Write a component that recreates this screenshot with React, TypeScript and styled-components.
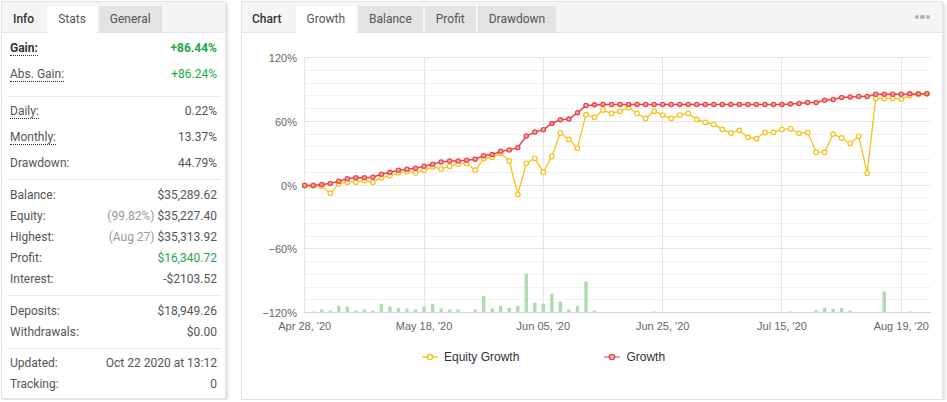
import React from 'react';
import styled, { createGlobalStyle } from 'styled-components';

const GlobalStyle = createGlobalStyle`
  html, body {
    margin: 0;
    padding: 0;
    background: #ffffff;
  }
  body {
    font-family: Roboto, 'Liberation Sans', Arial, sans-serif;
    font-size: 12px;
    color: #555555;
  }
`;

const Page = styled.div`
  display: flex;
  align-items: flex-start;
  gap: 15px;
  padding: 1px 0 0 1px;
`;

const Panel = styled.div<{ $width: number; $height: number }>`
  display: flex;
  flex-direction: column;
  box-sizing: border-box;
  width: ${(p) => p.$width}px;
  height: ${(p) => p.$height}px;
  background: #ffffff;
  border: 1px solid #e3e3e3;
  box-shadow: 2px 2px 3px rgba(0, 0, 0, 0.13);
`;

const Header = styled.div`
  display: flex;
  align-items: flex-end;
  height: 30px;
  background: #f5f5f5;
  border-bottom: 1px solid #e6e6e6;
`;

const Title = styled.div<{ $pl: number; $pr: number }>`
  height: 27px;
  line-height: 27px;
  margin-bottom: -1px;
  padding: 0 ${(p) => p.$pr}px 0 ${(p) => p.$pl}px;
  color: #333333;
  font-weight: 500;
`;

const Tab = styled.div<{ $active?: boolean }>`
  height: 27px;
  line-height: 27px;
  margin-bottom: -1px;
  margin-right: 2px;
  padding: 0 11px;
  background: ${(p) => (p.$active ? '#ffffff' : '#e3e3e3')};
  color: #555555;
`;

const Dots = styled.div`
  display: flex;
  gap: 1px;
  align-self: center;
  margin: 0 12px 0 auto;
`;

const Dot = styled.span`
  width: 4.5px;
  height: 4.5px;
  border-radius: 50%;
  background: #b3b3b3;
`;

const Section = styled.div<{ $pt: number; $pb: number; $last?: boolean }>`
  margin: 0 4px 0 5px;
  padding: ${(p) => p.$pt}px 0 ${(p) => p.$pb}px;
  border-bottom: ${(p) => (p.$last ? 'none' : '1px solid #ebebeb')};
`;

const Row = styled.div<{ $h: number }>`
  display: flex;
  align-items: center;
  justify-content: space-between;
  height: ${(p) => p.$h}px;
  padding: 0 4px 0 3px;
`;

const Label = styled.span<{ $tip?: boolean; $bold?: boolean }>`
  line-height: 14px;
  color: ${(p) => (p.$bold ? '#333333' : '#555555')};
  font-weight: ${(p) => (p.$bold ? 700 : 400)};
  border-bottom: ${(p) => (p.$tip ? '1px dotted #333333' : 'none')};
`;

const Value = styled.span<{ $green?: boolean; $bold?: boolean }>`
  color: ${(p) => (p.$green ? '#22a748' : '#555555')};
  font-weight: ${(p) => (p.$bold ? 700 : 400)};
`;

const Muted = styled.span`
  color: #9a9a9a;
  margin-right: 3px;
`;

const ChartBody = styled.div`
  display: flex;
  flex-direction: column;
`;

const Legend = styled.div`
  display: flex;
  align-items: center;
  gap: 85px;
  height: 34px;
  padding-left: 180px;
  font-family: 'Liberation Sans', Arial, sans-serif;
  font-size: 12px;
  color: #333333;
`;

const LegendItem = styled.div`
  display: flex;
  align-items: center;
  gap: 6px;
`;

type StatRow = {
  label: string;
  value: string;
  tip?: boolean;
  bold?: boolean;
  green?: boolean;
  muted?: string;
};

type StatSection = { pt: number; pb: number; h: number; rows: StatRow[] };

const sections: StatSection[] = [
  {
    pt: 2,
    pb: 9,
    h: 26,
    rows: [
      { label: 'Gain:', value: '+86.44%', tip: true, bold: true, green: true },
      { label: 'Abs. Gain:', value: '+86.24%', tip: true, green: true },
    ],
  },
  {
    pt: 1,
    pb: 3,
    h: 26,
    rows: [
      { label: 'Daily:', value: '0.22%', tip: true },
      { label: 'Monthly:', value: '13.37%', tip: true },
      { label: 'Drawdown:', value: '44.79%' },
    ],
  },
  {
    pt: 4,
    pb: 6,
    h: 21,
    rows: [
      { label: 'Balance:', value: '$35,289.62' },
      { label: 'Equity:', value: '$35,227.40', muted: '(99.82%)' },
      { label: 'Highest:', value: '$35,313.92', muted: '(Aug 27)' },
      { label: 'Profit:', value: '$16,340.72', green: true },
      { label: 'Interest:', value: '-$2103.52' },
    ],
  },
  {
    pt: 4,
    pb: 6,
    h: 21,
    rows: [
      { label: 'Deposits:', value: '$18,949.26' },
      { label: 'Withdrawals:', value: '$0.00' },
    ],
  },
  {
    pt: 3,
    pb: 0,
    h: 21,
    rows: [
      { label: 'Updated:', value: 'Oct 22 2020 at 13:12' },
      { label: 'Tracking:', value: '0' },
    ],
  },
];

// chart data, one point per trading day
const growth = [
  0, 0, 1, 2, 4, 6.3, 7.2, 7.2, 7.8, 10.6, 12.5, 14.4, 15.3, 16.3, 18.1, 20, 22.2, 23.1, 23.1, 23.7,
  24.7, 28.1, 29.1, 32.2, 33.4, 35.6, 46.6, 50.3, 52.5, 58.4, 61.9, 62.5, 68.4, 75.3, 75.9,
  76.25, 76.25, 76.25, 76.25, 76.25, 76.25, 76.25, 76.25, 76.25, 76.25, 76.25, 76.25, 76.25, 76.25,
  76.25, 76.25, 76.25, 76.25, 76.25, 76.25, 76.25, 76.25, 76.6, 77.2, 78.1, 78.1, 80.3, 80.9, 82.8,
  83.4, 83.75, 83.75, 85.9, 85.9, 85.9, 85.9, 86.25, 86.25, 86.44,
];

const equity = [
  0, 0, -0.6, -7.2, 1.6, 3.1, 3.1, 4.4, 3.1, 7.2, 9.4, 11.9, 13.1, 11.9, 14.4, 17.5, 15.6, 18.1, 20.3,
  20.9, 14.4, 25.3, 26.6, 30.3, 23.1, -8.4, 20.9, 25.6, 12.5, 27.5, 49.4, 43.4, 35, 66.6, 64.1,
  71, 67.8, 70, 73.4, 67.8, 63.1, 70, 66.3, 63.1, 66.3, 67.8, 62.2, 59.4, 57.5, 52.8, 49.4, 51.9,
  45.3, 44.1, 50, 50, 52.8, 53.4, 49.1, 50, 31.3, 31.3, 48.4, 44.7, 39.7, 46.3, 11.6, 81.9, 81.9,
  82.2, 81.3, 84.7, 85.6, 86.24,
];

const bars: Record<number, number> = {
  1: 1, 2: 3, 3: 2, 4: 6.7, 5: 5.7, 6: 2, 7: 3, 8: 2, 9: 8.7, 10: 6, 11: 4.7, 12: 4, 13: 3, 14: 5.7,
  15: 8.7, 16: 4, 17: 3, 18: 3, 19: 0.7, 20: 3, 21: 16.7, 22: 4, 23: 6.7, 24: 4.7, 25: 6.7, 26: 38.7,
  27: 9.7, 28: 8.7, 29: 18.7, 30: 11, 31: 3, 32: 6.7, 33: 31, 34: 2, 41: 1, 57: 1, 60: 2, 61: 4.7,
  62: 3.7, 63: 4.7, 64: 2, 65: 0.7, 68: 21, 71: 1,
};

const X0 = 304.7;
const DX = 8.523;
const PLOT_RIGHT = 931;
const BASE = 312.5;
const xOf = (i: number) => X0 + i * DX;
const yOf = (v: number) => 185.5 - v * (63.75 / 60);

const YELLOW = '#f8c11a';
const RED = '#ec4346';

const yLabels = ['120%', '60%', '0%', '\u221260%', '\u2212120%'];
const xTicks = [
  { i: 0, text: "Apr 28, '20" },
  { i: 14, text: "May 18, '20" },
  { i: 28, text: "Jun 05, '20" },
  { i: 42, text: "Jun 25, '20" },
  { i: 56, text: "Jul 15, '20" },
  { i: 70, text: "Aug 19, '20" },
];

const toPoints = (data: number[]) =>
  data.map((v, i) => `${xOf(i).toFixed(1)},${yOf(v).toFixed(1)}`).join(' ');

const GrowthChart: React.FC = () => {
  const grid = Array.from({ length: 21 }, (_, k) => Math.round(57 + k * 12.75) + 0.5);
  return (
    <svg width={700} height={307} viewBox="242 33 700 307">
      {grid.map((y, k) =>
        k === 20 ? null : (
          <line
            key={k}
            x1={X0 - 0.2}
            x2={PLOT_RIGHT}
            y1={y}
            y2={y}
            stroke={k % 5 === 0 ? '#e6e6e6' : '#f3f3f3'}
            strokeWidth={1}
          />
        ),
      )}
      {xTicks.map((t) => {
        const x = Math.floor(xOf(t.i)) + 0.5;
        return (
          <line key={t.i} x1={x} x2={x} y1={57} y2={BASE} stroke="#e6e6e6" strokeWidth={1} />
        );
      })}
      {Object.entries(bars).map(([k, h]) => {
        const x = xOf(Number(k));
        return (
          <rect key={k} x={x - 1.7} y={BASE - h} width={3.4} height={h} fill="#aedcae" />
        );
      })}
      <line x1={X0 - 0.2} x2={PLOT_RIGHT} y1={BASE} y2={BASE} stroke="#ccd6eb" strokeWidth={1} />

      {yLabels.map((text, n) => (
        <text
          key={text}
          x={297}
          y={grid[n * 5] + 4}
          textAnchor="end"
          fontFamily="'Liberation Sans', Arial, sans-serif"
          fontSize={11}
          fill="#666666"
        >
          {text}
        </text>
      ))}
      {xTicks.map((t) => (
        <text
          key={t.text}
          x={xOf(t.i)}
          y={330}
          textAnchor="middle"
          fontFamily="'Liberation Sans', Arial, sans-serif"
          fontSize={11}
          fill="#666666"
        >
          {t.text}
        </text>
      ))}

      <polyline points={toPoints(equity)} fill="none" stroke={YELLOW} strokeWidth={1.3} />
      {equity.map((v, i) => (
        <circle key={i} cx={xOf(i)} cy={yOf(v)} r={2.3} fill="#ffffff" stroke={YELLOW} strokeWidth={1.2} />
      ))}
      <polyline points={toPoints(growth)} fill="none" stroke={RED} strokeWidth={1.5} />
      {growth.map((v, i) => (
        <circle key={i} cx={xOf(i)} cy={yOf(v)} r={2.1} fill="#f6a8a8" stroke={RED} strokeWidth={1.3} />
      ))}
    </svg>
  );
};

const LegendIcon: React.FC<{ color: string; line: string; fill: string }> = ({ color, line, fill }) => (
  <svg width={16} height={10} viewBox="0 0 16 10">
    <line x1={0} x2={16} y1={5} y2={5} stroke={line} strokeWidth={2} />
    <circle cx={8} cy={5} r={2.6} fill={fill} stroke={color} strokeWidth={1.4} />
  </svg>
);

const App: React.FC = () => {
  return (
    <>
      <GlobalStyle />
      <Page>
        <Panel $width={225} $height={398}>
          <Header>
            <Title $pl={11} $pr={13}>Info</Title>
            <Tab $active>Stats</Tab>
            <Tab>General</Tab>
          </Header>
          {sections.map((s, n) => (
            <Section key={n} $pt={s.pt} $pb={s.pb} $last={n === sections.length - 1}>
              {s.rows.map((r) => (
                <Row key={r.label} $h={s.h}>
                  <Label $tip={r.tip} $bold={r.bold}>
                    {r.label}
                  </Label>
                  <Value $green={r.green} $bold={r.bold}>
                    {r.muted && <Muted>{r.muted}</Muted>}
                    {r.value}
                  </Value>
                </Row>
              ))}
            </Section>
          ))}
        </Panel>

        <Panel $width={702} $height={399}>
          <Header>
            <Title $pl={10} $pr={14}>Chart</Title>
            <Tab $active>Growth</Tab>
            <Tab>Balance</Tab>
            <Tab>Profit</Tab>
            <Tab>Drawdown</Tab>
            <Dots>
              <Dot />
              <Dot />
              <Dot />
            </Dots>
          </Header>
          <ChartBody>
            <GrowthChart />
            <Legend>
              <LegendItem>
                <LegendIcon color={YELLOW} line="#fbd66a" fill="#ffffff" />
                Equity Growth
              </LegendItem>
              <LegendItem>
                <LegendIcon color={RED} line="#f39a9a" fill="#f8b4b4" />
                Growth
              </LegendItem>
            </Legend>
          </ChartBody>
        </Panel>
      </Page>
    </>
  );
};

export default App;
